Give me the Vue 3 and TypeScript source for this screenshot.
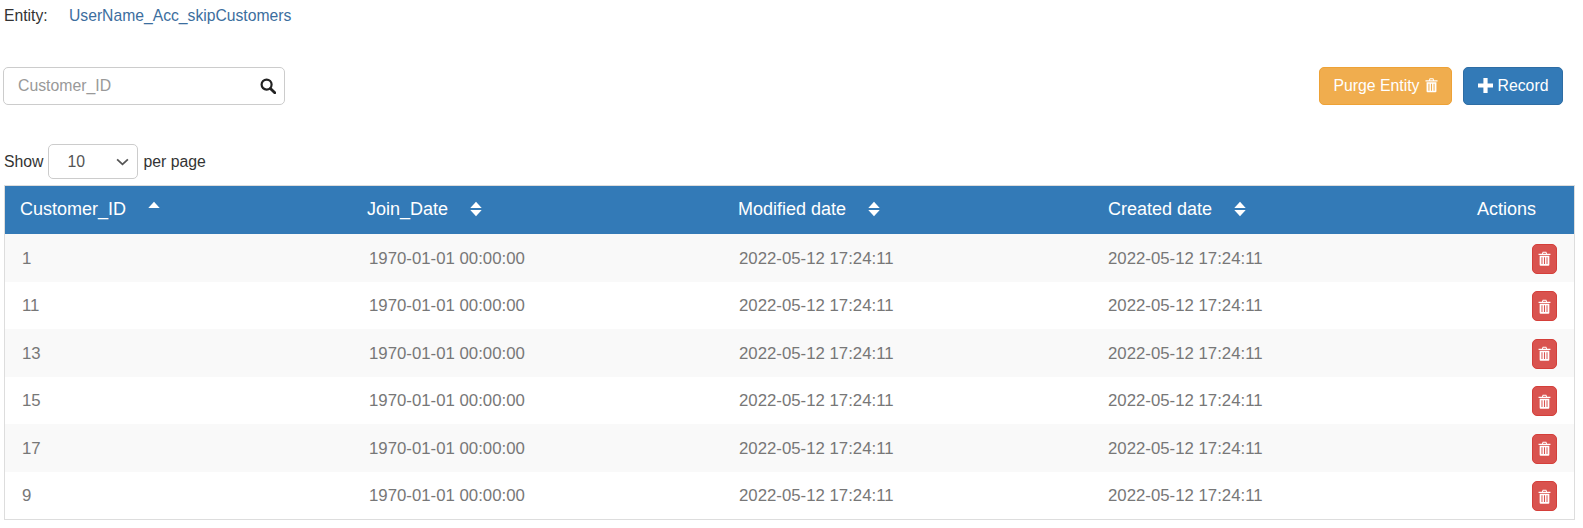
<script setup lang="ts">
const headers = [
  { label: "Customer_ID", sort: "asc" },
  { label: "Join_Date", sort: "both" },
  { label: "Modified date", sort: "both" },
  { label: "Created date", sort: "both" },
];
const ids = [1, 11, 13, 15, 17, 9];
const trash =
  "M4.2 3L5 .8h4L9.8 3H8.7L8.2 1.9H5.8L5.3 3zM.5 3h13v1.5H.5zM1.7 5.3h10.6V15a1 1 0 0 1-1 1H2.7a1 1 0 0 1-1-1zm2 1.6v7.4h1.1V6.9zm2.7 0v7.4h1.2V6.9zm2.8 0v7.4h1.1V6.9z";
</script>

<template>
  <div class="page">
    <div class="entity">
      <span class="entity-label">Entity:</span>
      <a class="entity-link">UserName_Acc_skipCustomers</a>
    </div>

    <div class="toolbar">
      <div class="search">
        <input type="text" placeholder="Customer_ID" />
        <svg class="search-icon" viewBox="0 0 16 16" width="16" height="16">
          <circle cx="6.6" cy="6.6" r="5" fill="none" stroke="#222" stroke-width="2.2" />
          <path d="M10.4 10.4l4.4 4.4" stroke="#222" stroke-width="2.8" stroke-linecap="round" />
        </svg>
      </div>
      <div class="actions">
        <button class="btn btn-purge">
          Purge Entity
          <svg class="trash-icon" viewBox="0 0 14 16.4" width="13" height="16"><path :d="trash" fill="currentColor" fill-rule="evenodd" /></svg>
        </button>
        <button class="btn btn-record">
          <svg class="plus-icon" viewBox="0 0 15 15" width="15" height="15"><path d="M5.4 0h4.2v5.4H15v4.2H9.6V15H5.4V9.6H0V5.4h5.4z" fill="currentColor" /></svg>
          Record
        </button>
      </div>
    </div>

    <div class="pager">
      <span>Show</span>
      <div class="select-wrap">
        <select>
          <option>10</option>
          <option>25</option>
          <option>50</option>
        </select>
        <svg class="chevron" viewBox="0 0 14 8" width="13" height="8">
          <path d="M1.2 1.2L7 6.6l5.8-5.4" fill="none" stroke="#555" stroke-width="1.9" />
        </svg>
      </div>
      <span>per page</span>
    </div>

    <table>
      <colgroup>
        <col class="c1" />
        <col class="c2" />
        <col class="c3" />
        <col class="c4" />
        <col />
      </colgroup>
      <thead>
        <tr>
          <th v-for="h in headers" :key="h.label">
            <span class="th-inner">
              {{ h.label }}
              <svg viewBox="0 0 12 16" width="12" height="16" class="sort">
                <path d="M6 .7L11.7 7H.3z" fill="#fff" />
                <path v-if="h.sort === 'both'" d="M6 15.3L.3 9h11.4z" fill="#fff" />
              </svg>
            </span>
          </th>
          <th class="th-actions">Actions</th>
        </tr>
      </thead>
      <tbody>
        <tr v-for="id in ids" :key="id">
          <td>{{ id }}</td>
          <td>1970-01-01 00:00:00</td>
          <td>2022-05-12 17:24:11</td>
          <td>2022-05-12 17:24:11</td>
          <td class="td-actions">
            <button class="del">
              <svg viewBox="0 0 14 16.4" width="13" height="15"><path :d="trash" fill="#fff" fill-rule="evenodd" /></svg>
            </button>
          </td>
        </tr>
      </tbody>
    </table>
  </div>
</template>

<style>
body {
  margin: 0;
  background: #fff;
}
</style>

<style scoped>
.page {
  font-family: "Liberation Sans", Arial, sans-serif;
  font-size: 15.8px;
  color: #333;
  padding: 6px 9px 0 4px;
  box-sizing: border-box;
  width: 1583px;
}

.entity {
  display: flex;
  height: 20px;
  line-height: 20px;
  font-size: 15.7px;
}

.entity-label {
  width: 65px;
}

.entity-link {
  color: #3c6e9e;
}

.toolbar {
  display: flex;
  justify-content: space-between;
  margin-top: 41px;
  margin-right: 11px;
}

.search {
  position: relative;
  width: 282px;
  margin-left: -1px;
}

.search input {
  width: 100%;
  height: 38px;
  box-sizing: border-box;
  border: 1px solid #ccc;
  border-radius: 5px;
  padding: 0 44px 0 14px;
  font: inherit;
  color: #555;
  outline: none;
}

.search input::placeholder {
  color: #999;
  opacity: 1;
}

.search-icon {
  position: absolute;
  right: 9px;
  top: 11px;
}

.actions {
  display: flex;
  gap: 11px;
}

.btn {
  display: inline-flex;
  align-items: center;
  justify-content: center;
  gap: 5px;
  height: 38px;
  box-sizing: border-box;
  border-radius: 5px;
  color: #fff;
  font: inherit;
  padding: 0;
}

.trash-icon {
  margin-top: -3px;
}

.plus-icon {
  margin-top: -2px;
}

.btn-purge {
  width: 133px;
  background: #f0ad4e;
  border: 1px solid #eea236;
}

.btn-record {
  width: 100px;
  background: #337ab7;
  border: 1px solid #2e6da4;
}

.pager {
  display: flex;
  align-items: center;
  gap: 5px;
  margin-top: 39px;
  height: 35px;
}

.select-wrap {
  position: relative;
  width: 90px;
  height: 35px;
  margin-left: -1px;
  margin-right: 1px;
}

.select-wrap select {
  appearance: none;
  width: 100%;
  height: 100%;
  box-sizing: border-box;
  border: 1px solid #ccc;
  border-radius: 5px;
  background: #fff;
  padding: 0 0 0 19px;
  font: inherit;
  color: #555;
  outline: none;
}

.chevron {
  position: absolute;
  right: 9px;
  top: 14px;
}

table {
  width: 1571px;
  margin-top: 6px;
  border-collapse: separate;
  border-spacing: 0;
  table-layout: fixed;
  border: 1px solid #ddd;
  box-sizing: border-box;
}

.c1 {
  width: 347px;
}

.c2 {
  width: 370px;
}

.c3 {
  width: 369px;
}

.c4 {
  width: 351px;
}

thead th {
  background: #337ab7;
  color: #fff;
  font-size: 18px;
  font-weight: 400;
  text-align: left;
  height: 48px;
  box-sizing: border-box;
  padding: 0 0 2px 15px;
}

thead th:nth-child(3) {
  padding-left: 16px;
}

thead th:nth-child(4) {
  padding-left: 17px;
}

.th-inner {
  display: inline-flex;
  align-items: center;
  gap: 22px;
}

.sort {
  margin-top: -1px;
}

thead th.th-actions {
  padding-left: 35px;
}

tbody td {
  height: 47.5px;
  padding: 2px 0 0 17px;
  color: #777;
  font-size: 16.8px;
  box-sizing: border-box;
}

tbody tr:nth-child(odd) td {
  background: #f9f9f9;
}

tbody td.td-actions {
  text-align: right;
  padding: 2px 17px 0 0;
}

.del {
  width: 25px;
  height: 30px;
  border: 1px solid #d43f3a;
  border-radius: 5px;
  background: #d9534f;
  padding: 0;
  display: inline-flex;
  align-items: center;
  justify-content: center;
  vertical-align: middle;
}
</style>
